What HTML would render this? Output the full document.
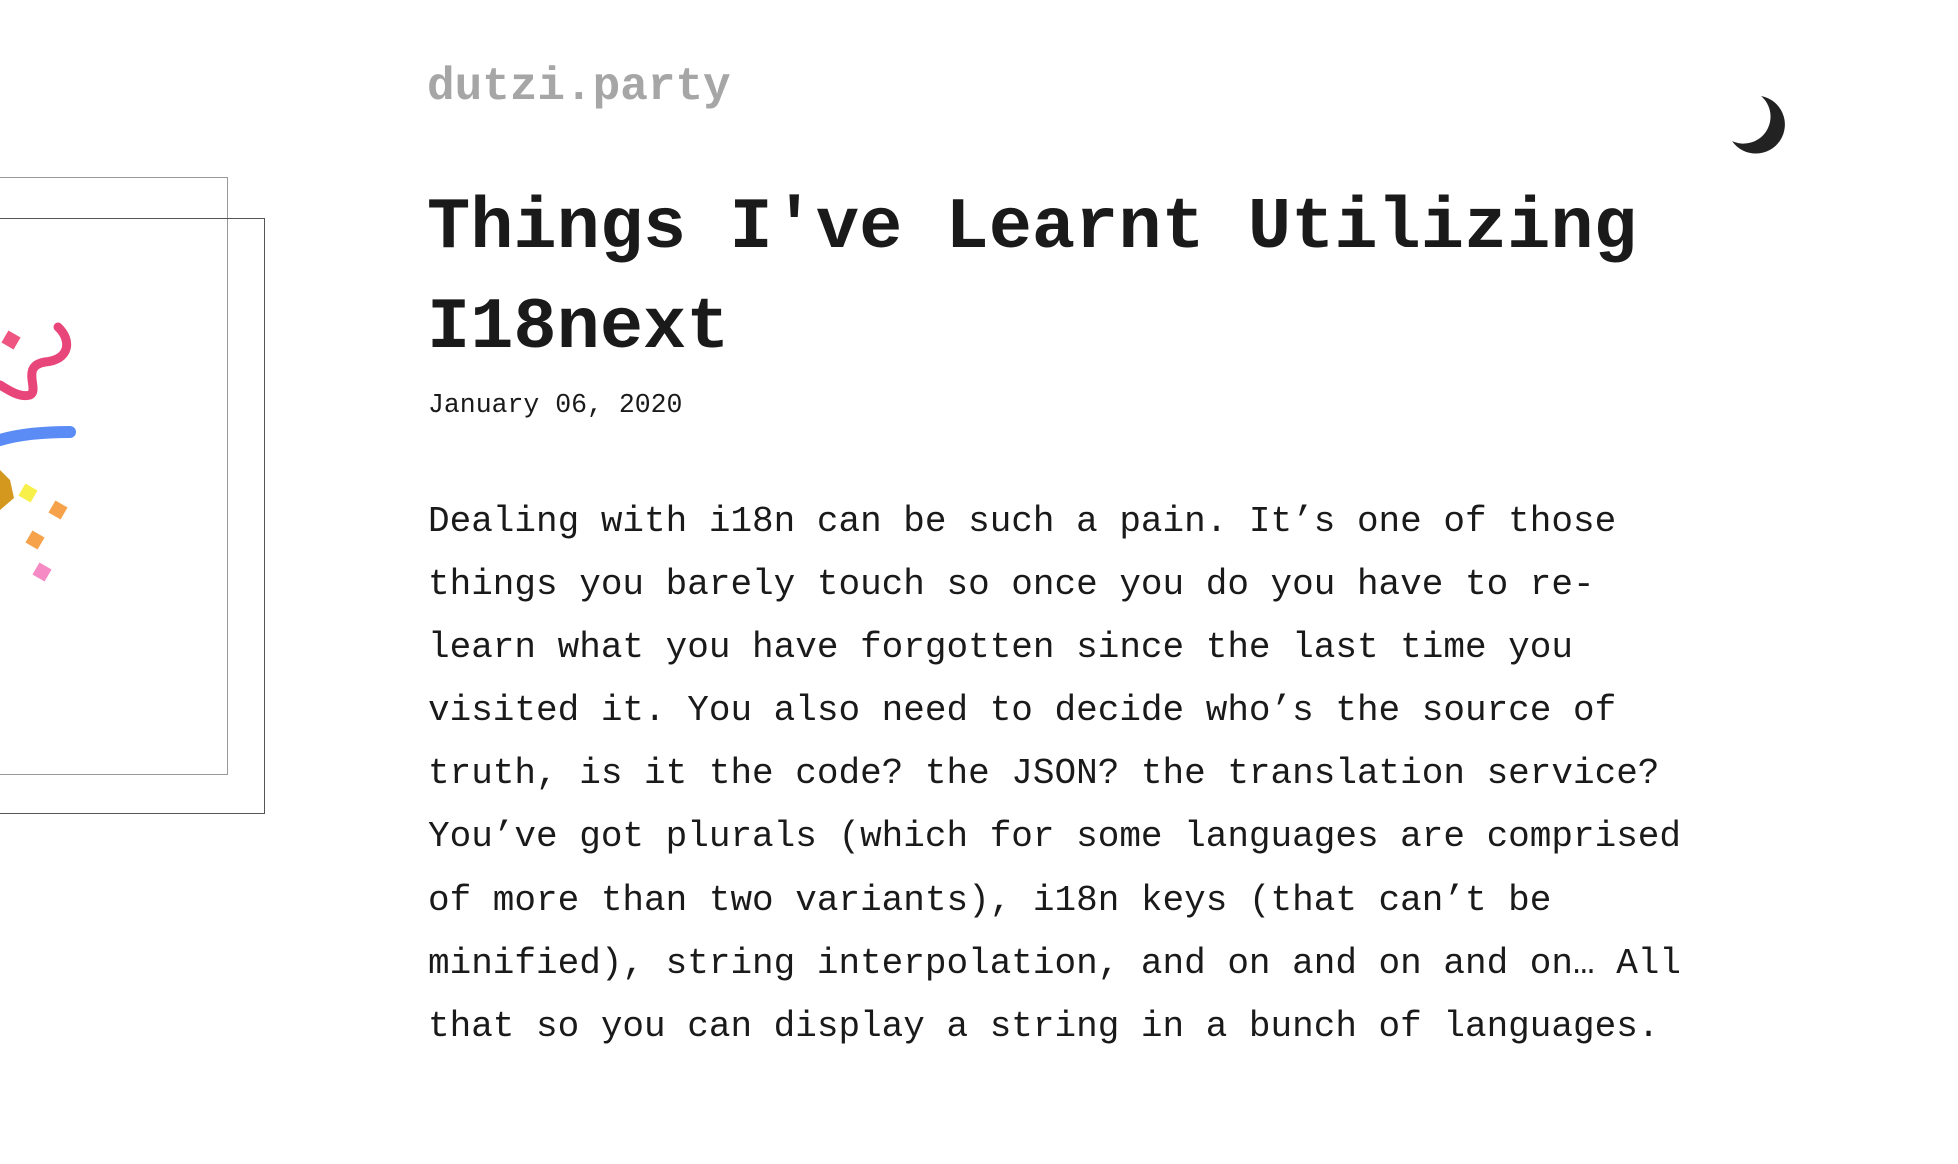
<!DOCTYPE html>
<html><head><meta charset="utf-8"><style>
html,body{margin:0;padding:0;background:#fff;width:1958px;height:1164px;overflow:hidden;position:relative;font-family:"Liberation Mono",monospace;color:#1a1a1a}
.site{position:absolute;left:427px;top:57px;font-size:46px;font-weight:bold;color:#a6a6a6;line-height:60px}
h1{position:absolute;left:427px;top:178px;margin:0;font-size:72px;line-height:100px;font-weight:bold;width:1300px;color:#1a1a1a}
.date{position:absolute;left:428px;top:389px;font-size:26.5px;line-height:32px}
.body{position:absolute;left:428px;top:490px;font-size:36px;line-height:63.1px;width:1320px;white-space:pre}
.r1{position:absolute;left:-2px;top:177px;width:228px;height:596px;border:1.5px solid #999}
.r2{position:absolute;left:-2px;top:218px;width:265px;height:594px;border:1.5px solid #555}
</style></head><body>
<div class="r1"></div><div class="r2"></div>
<svg style="position:absolute;left:0;top:300px" width="100" height="300">
<rect x="4" y="33" width="14" height="14" fill="#ee5580" transform="rotate(30 11 40)"/>
<path d="M58 27 C72 40 70 60 45 62 C20 66 40 90 30 95 C20 98 8 90 0 85" stroke="#e8457a" stroke-width="9" fill="none" stroke-linecap="round"/>
<path d="M0 140 C20 134 45 132 70 132" stroke="#5b8cf5" stroke-width="12" fill="none" stroke-linecap="round"/>
<path d="M0 170 L10 180 L14 198 L0 210 Z" fill="#d4981f"/>
<rect x="21" y="186" width="14" height="14" fill="#f7ef4a" transform="rotate(30 28 193)"/>
<rect x="51" y="203" width="14" height="14" fill="#f5a24a" transform="rotate(30 58 210)"/>
<rect x="28" y="233" width="14" height="14" fill="#f5a24a" transform="rotate(30 35 240)"/>
<rect x="35" y="265" width="14" height="14" fill="#f58ac4" transform="rotate(30 42 272)"/>
</svg>
<svg style="position:absolute;left:1728px;top:92px" width="64" height="64" viewBox="0 0 64 64">
<path d="M33 4 A29 29 0 1 1 4 49 A27 27 0 0 0 33 4 Z" fill="#222"/>
</svg>
<div class="site">dutzi.party</div>
<h1>Things I've Learnt Utilizing<br>I18next</h1>
<div class="date">January 06, 2020</div>
<div class="body">Dealing with i18n can be such a pain. It’s one of those
things you barely touch so once you do you have to re-
learn what you have forgotten since the last time you
visited it. You also need to decide who’s the source of
truth, is it the code? the JSON? the translation service?
You’ve got plurals (which for some languages are comprised
of more than two variants), i18n keys (that can’t be
minified), string interpolation, and on and on and on… All
that so you can display a string in a bunch of languages.</div>
</body></html>
